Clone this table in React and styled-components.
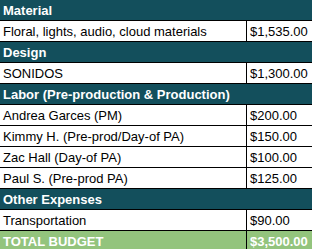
import React from "react";
import styled, { createGlobalStyle } from "styled-components";

const Global = createGlobalStyle`
  html, body { margin: 0; padding: 0; background: #ffffff; }
  body { font-family: "Liberation Sans", Arial, sans-serif; }
`;

const Sheet = styled.div`
  width: 312px;
  display: flex;
  flex-direction: column;
  font-family: "Liberation Sans", Arial, sans-serif;
  font-size: 13px;
`;

const SectionRow = styled.div`
  height: 20px;
  border-bottom: 1px solid #000;
  background: #134f5c;
  color: #ffffff;
  font-weight: bold;
  display: flex;
  align-items: center;
  padding-left: 3px;
  white-space: nowrap;
`;

const ItemRow = styled.div`
  height: 20px;
  border-bottom: 1px solid #000;
  display: grid;
  grid-template-columns: 247px 1fr;
  background: ${(p) => (p.$total ? "#93c47d" : "#ffffff")};
  color: ${(p) => (p.$total ? "#ffffff" : "#000000")};
  font-weight: ${(p) => (p.$total ? "bold" : "normal")};
`;

const Label = styled.div`
  border-right: 1px solid #000;
  display: flex;
  align-items: center;
  padding-left: 3px;
  white-space: nowrap;
  overflow: hidden;
`;

const Value = styled.div`
  display: flex;
  align-items: center;
  padding-left: 3px;
  white-space: nowrap;
`;

const data = [
  { section: "Material", items: [["Floral, lights, audio, cloud materials", "$1,535.00"]] },
  { section: "Design", items: [["SONIDOS", "$1,300.00"]] },
  {
    section: "Labor (Pre-production & Production)",
    items: [
      ["Andrea Garces (PM)", "$200.00"],
      ["Kimmy H. (Pre-prod/Day-of PA)", "$150.00"],
      ["Zac Hall (Day-of PA)", "$100.00"],
      ["Paul S. (Pre-prod PA)", "$125.00"],
    ],
  },
  { section: "Other Expenses", items: [["Transportation", "$90.00"]] },
];

export default function App() {
  return (
    <>
      <Global />
      <Sheet>
        {data.map((s) => (
          <React.Fragment key={s.section}>
            <SectionRow>{s.section}</SectionRow>
            {s.items.map(([l, v]) => (
              <ItemRow key={l}>
                <Label>{l}</Label>
                <Value>{v}</Value>
              </ItemRow>
            ))}
          </React.Fragment>
        ))}
        <ItemRow $total>
          <Label>TOTAL BUDGET</Label>
          <Value>$3,500.00</Value>
        </ItemRow>
      </Sheet>
    </>
  );
}
